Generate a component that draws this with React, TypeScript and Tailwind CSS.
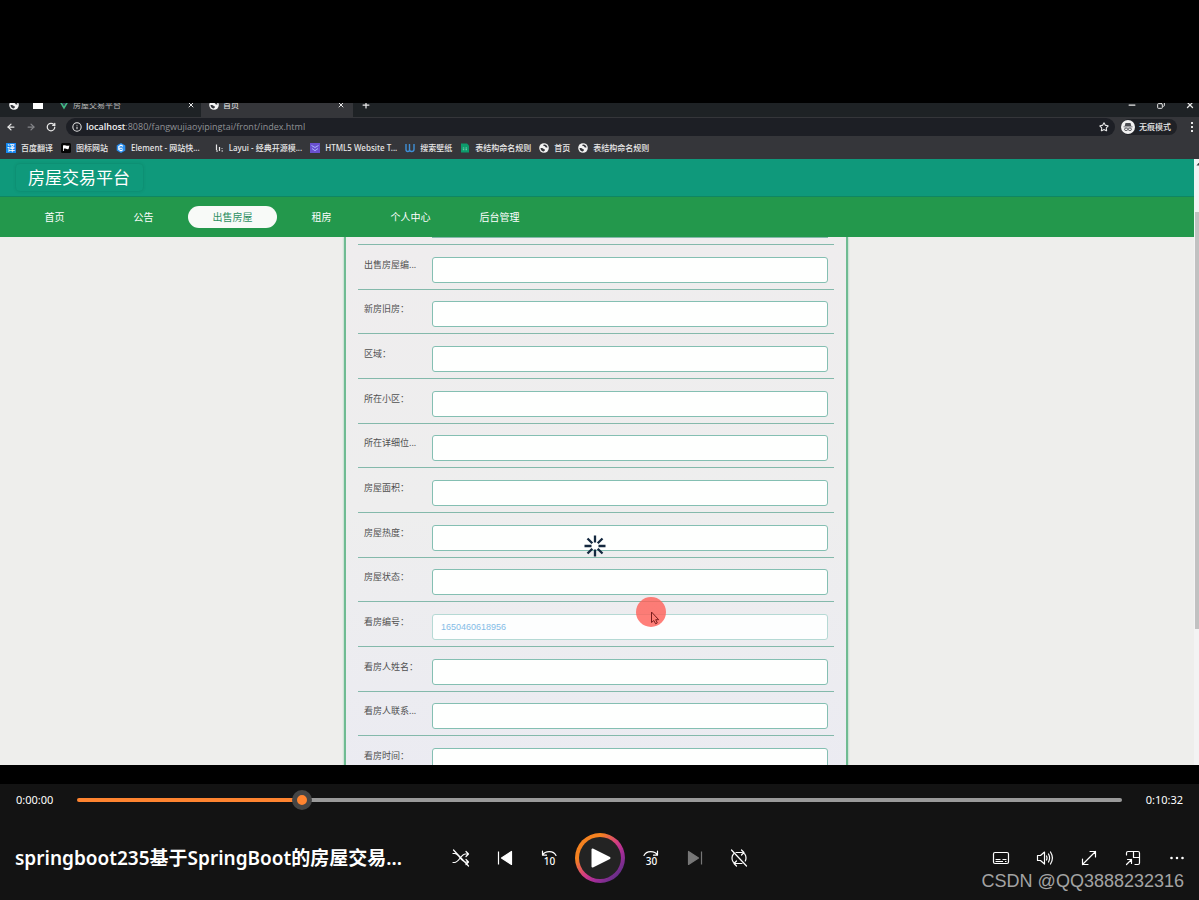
import React, { useState } from "react";
import { Star, RotateCw, ArrowLeft, ArrowRight, Info, Minus, Copy, X, Plus } from "lucide-react";

const NAV_ITEMS = ["首页", "公告", "出售房屋", "租房", "个人中心", "后台管理"];

const FIELDS = [
  { id: "bianhao", label: "出售房屋编..." },
  { id: "xinjiu", label: "新房旧房：" },
  { id: "quyu", label: "区域：" },
  { id: "xiaoqu", label: "所在小区：" },
  { id: "weizhi", label: "所在详细位..." },
  { id: "mianji", label: "房屋面积：" },
  { id: "redu", label: "房屋热度：" },
  { id: "zhuangtai", label: "房屋状态：" },
  { id: "kanfang", label: "看房编号：", value: "1650460618956" },
  { id: "xingming", label: "看房人姓名：" },
  { id: "lianxi", label: "看房人联系..." },
  { id: "shijian", label: "看房时间：" },
];

function SiteIcon({ className = "" }: { className?: string }) {
  return (
    <svg viewBox="0 0 10 10" className={`w-2.5 h-2.5 shrink-0 ${className}`}>
      <circle cx="5" cy="5" r="4.8" fill="#f4f4f4" />
      <path d="M4.800 1.400c-1 .9-.4 1.700.6 1.700.9 0 .6 1.100 1.500 1.300l1.600.2c.1-1.700-1.500-3.400-3.700-3.200z" fill="#33353a" />
      <path d="M1.500 5c1.200-.3 2.500 0 3 .8.4.7 1.500.5 1.500 1.300 0 .6-.9.8-1.100 1.500C3 8.300 1.500 7 1.500 5z" fill="#33353a" />
    </svg>
  );
}

const BOOKMARKS = [
  {
    label: "百度翻译",
    icon: <span className="w-2.5 h-2.5 bg-[#1686f0] text-white text-[8px] leading-[10px] text-center">译</span>,
  },
  {
    label: "图标网站",
    icon: (
      <svg viewBox="0 0 10 10" className="w-2.5 h-2.5">
        <rect width="10" height="10" rx="1.5" fill="#050505" />
        <path d="M2 8V2.500c2-1 3 .8 6.400 0L7.600 6C5.500 6.800 4.500 5 2.800 5.800V8z" fill="#fff" />
      </svg>
    ),
  },
  {
    label: "Element - 网站快...",
    icon: (
      <svg viewBox="0 0 10 10" className="w-2.5 h-2.5">
        <path d="M5 0l4.300 2.500v5L5 10 .7 7.500v-5z" fill="#2a8ff0" />
        <path d="M7 3.200L5 2.200 2.800 3.500v3L5 7.800l2-1.200M3 5.200h3.500" fill="none" stroke="#fff" strokeWidth="1.1" />
      </svg>
    ),
  },
  {
    label: "Layui - 经典开源模...",
    icon: (
      <svg viewBox="0 0 10 10" className="w-2.5 h-2.5 ml-1.5">
        <path d="M2.500 1.500v5.500M2 8h2M5.500 4v4M8 5v.8M7.500 8h1.500" stroke="#e6e6e6" strokeWidth="1.200" fill="none" />
      </svg>
    ),
  },
  {
    label: "HTML5 Website T...",
    icon: (
      <svg viewBox="0 0 10 10" className="w-2.5 h-2.5">
        <rect width="10" height="10" fill="#6a50cf" />
        <path d="M1.500 2.500l3.500 2 3.500-2M2 5.500l3 2.200 3-2.200" stroke="#a9b4ff" strokeWidth="1" fill="none" />
      </svg>
    ),
  },
  {
    label: "搜索壁纸",
    icon: (
      <svg viewBox="0 0 10 10" className="w-2.5 h-2.5">
        <path d="M1 1v5.500q0 2 1.800 2t1.700-2V1M4.500 6.500q0 2 2.200 2t2.300-2V1" stroke="#3f8fd6" strokeWidth="1.400" fill="none" />
      </svg>
    ),
  },
  {
    label: "表结构命名规则",
    icon: (
      <svg viewBox="0 0 10 10" className="w-2.5 h-2.5">
        <path d="M1 .5h6L9 2.500v7H1z" fill="#0d9b6c" />
        <path d="M2.800 5h1.500M5.500 5H7M2.800 6.700h1.500M5.500 6.700H7" stroke="#8fe0c2" strokeWidth=".8" />
      </svg>
    ),
  },
  { label: "首页", icon: <SiteIcon /> },
  { label: "表结构命名规则", icon: <SiteIcon /> },
];

function BrowserBar() {
  return (
    <div className="shrink-0 bg-[#35363a] text-[#e8e8e8]">
      {/* Tabs, cut off by the top of the frame */}
      <div className="h-3.5 flex items-end overflow-hidden bg-[#1e2225] text-[8px]">
        <div className="w-full h-6 shrink-0 flex items-center">
          <SiteIcon className="ml-[9px]" />
          <svg viewBox="0 0 10 8" className="w-2.5 h-2 ml-3.5">
            <path d="M0 0h4l1 1h5v7H0z" fill="#fff" />
          </svg>
          <div className="w-[150px] h-full flex items-center ml-2 pl-2 pr-1.5 gap-1">
            <svg viewBox="0 0 10 10" className="w-2.5 h-2.5">
              <path d="M0 1h2l3 5 3-5h2L5 9.500z" fill="#41b883" />
              <path d="M2 1h2l1 1.800L6 1h2L5 6z" fill="#35495e" />
            </svg>
            <span className="flex-1 text-[#b8b8b8]">房屋交易平台</span>
            <X className="w-2 h-2" strokeWidth={3} />
          </div>
          <div className="w-[152px] h-full flex items-center bg-[#35363a] px-2 gap-1">
            <SiteIcon />
            <span className="flex-1">首页</span>
            <X className="w-2 h-2" strokeWidth={3} />
          </div>
          <Plus className="w-2.5 h-2.5 ml-2" strokeWidth={3} />
          <div className="ml-auto flex items-center gap-5 pr-1">
            <Minus className="w-2.5 h-2.5" strokeWidth={3} />
            <Copy className="w-2 h-2 -scale-x-100" strokeWidth={3} />
            <X className="w-2.5 h-2.5" strokeWidth={3} />
          </div>
        </div>
      </div>

      {/* Address */}
      <div className="h-5 flex items-center pl-1.5 pr-1.5 gap-2.5">
        <button aria-label="后退"><ArrowLeft className="w-2.5 h-2.5" strokeWidth={3} /></button>
        <button aria-label="前进"><ArrowRight className="w-2.5 h-2.5 text-[#85868a]" strokeWidth={3} /></button>
        <button aria-label="刷新"><RotateCw className="w-2.5 h-2.5" strokeWidth={3} /></button>
        <div className="flex-1 h-[18px] rounded-full bg-[#1d1f25] flex items-center px-1.5 gap-1">
          <Info className="w-2.5 h-2.5 shrink-0" strokeWidth={2.5} />
          <span className="flex-1 text-[9px] font-['Open_Sans','Noto_Sans_CJK_SC',sans-serif] text-[#909296]">
            <span className="text-[#f1f1f1] font-semibold">localhost</span>:8080/fangwujiaoyipingtai/front/index.html
          </span>
          <Star className="w-2.5 h-2.5" strokeWidth={2.5} />
        </div>
        <div className="h-4 rounded-full bg-[#1f2126] flex items-center gap-1 pr-1.5 -ml-1 mr-1">
          <svg viewBox="0 0 14 14" className="w-3.5 h-3.5">
            <circle cx="7" cy="7" r="7" fill="#f1f1f1" />
            <path d="M4.500 3h5l.8 3H3.700zM2.500 6.500h9v.8h-9z" fill="#4b4d52" />
            <path d="M3.500 9.300a1.600 1.300 0 1 0 3.200 0 1.600 1.300 0 1 0-3.200 0M7.300 9.300a1.600 1.300 0 1 0 3.200 0 1.600 1.300 0 1 0-3.200 0" fill="none" stroke="#4b4d52" strokeWidth=".9" />
          </svg>
          <span className="text-[8px] leading-none font-medium">无痕模式</span>
        </div>
        <svg viewBox="0 0 2 10" className="w-0.5 h-2.5">
          <path d="M0 0h2v2H0zM0 4h2v2H0zM0 8h2v2H0z" fill="#e8e8e8" />
        </svg>
      </div>

      {/* Bookmarks */}
      <div className="h-[22px] flex items-center pl-1.5 gap-2 text-[8px] leading-none font-medium whitespace-nowrap">
        {BOOKMARKS.map((item, i) => (
          <a key={i} href="#" className="flex items-center gap-[5px]">
            {item.icon}
            {item.label}
          </a>
        ))}
      </div>
    </div>
  );
}

function Site() {
  return (
    <div className="flex-1 min-h-0 flex">
      <div className="flex-1 flex flex-col bg-[#eeeeec]">
        <header className="h-[38px] shrink-0 bg-[#0f997b] border-b border-[#0f8762] flex items-center pl-4">
          <h1 className="w-[127px] h-[27px] pl-3 rounded-sm shadow-[0_0_3px_rgba(0,80,60,0.3)] text-white text-[17px] leading-7">
            房屋交易平台
          </h1>
        </header>
        <nav className="h-10 shrink-0 bg-[#23984c] flex items-center pl-2.5 text-[10px] text-white">
          {NAV_ITEMS.map((item) => (
            <a
              key={item}
              href="#"
              className={
                item === "出售房屋"
                  ? "w-[89px] h-[22px] leading-[22px] rounded-full bg-[#f8faf8] text-[#2d8f62] text-center"
                  : "w-[89px] h-[22px] leading-[22px] text-center"
              }
            >
              {item}
            </a>
          ))}
        </nav>

        <div className="flex-1 min-h-0 overflow-hidden pr-0.5">
          <form className="relative w-[504px] mx-auto px-3 border-x-2 border-[#6fbb92] shadow-[0_0_2px_#8fcfae] bg-linear-to-b from-[#efedee] via-[#eeeeee] to-[#ebebf2]">
            <div className="h-2 border-b border-[#84b9ab] pl-[74px] pr-1.5">
              <div className="h-px bg-[#84b9ab]" />
            </div>
            <div className="h-[536px] grid auto-rows-fr">
              {FIELDS.map((field) => (
                <div key={field.id} className="flex items-end pb-1.5 px-1.5 border-b border-[#84b9ab]">
                  <label htmlFor={field.id} className="w-14 mr-3 h-9 leading-9 text-[9px] text-[#505050] whitespace-nowrap">
                    {field.label}
                  </label>
                  <input
                    id={field.id}
                    type="text"
                    readOnly={!!field.value}
                    defaultValue={field.value}
                    className={
                      field.value
                        ? "flex-1 h-[26px] px-2 rounded-[3px] border border-[#b5d9d4] bg-[#fdfefe] text-[9px] text-[#84bce6] font-['Liberation_Sans',sans-serif]"
                        : "flex-1 h-[26px] px-2 rounded-[3px] border border-[#84bfb2] bg-[#fefffe] text-[9px]"
                    }
                  />
                </div>
              ))}
            </div>

            {/* Busy indicator */}
            <svg viewBox="0 0 22 22" className="absolute left-[238px] top-[298px] w-[22px] h-[22px]">
              <path
                d="M11 .5v7M11 14.500v7M.5 11h7M14.500 11h7M3.500 3.500l4.800 4.800M13.700 13.700l4.800 4.800M18.500 3.500l-4.800 4.800M8.300 13.700l-4.800 4.800"
                stroke="#14283f"
                strokeWidth="2.300"
              />
            </svg>

            {/* Pointer */}
            <svg viewBox="0 0 30 30" className="absolute left-[290px] top-[360px] w-[30px] h-[30px]">
              <circle cx="15" cy="15" r="15" fill="#ff5f58" fillOpacity=".8" />
              <path d="M15.500 15v10.500l2.300-2 1.800 3.300 1.700-.9-1.600-3.200h3z" fill="#ff7d75" stroke="#7a1d1d" strokeWidth="1" />
            </svg>
          </form>
        </div>
      </div>

      {/* Scrollbar */}
      <div className="w-[5px] shrink-0 bg-[#f3f3f3]">
        <svg viewBox="0 0 5 10" className="w-[5px] h-2.5">
          <path d="M2.500 6.500l2-2.500L5 4v2.500z" fill="#444" />
        </svg>
        <div className="mt-[43px] ml-px h-[417px] bg-[#c1c1c1]" />
      </div>
    </div>
  );
}

function Icon({ children, className = "" }: { children: React.ReactNode; className?: string }) {
  return (
    <svg
      viewBox="0 0 18 18"
      className={`w-[18px] h-[18px] ${className}`}
      fill="none"
      stroke="currentColor"
      strokeWidth="1.200"
      strokeLinecap="round"
      strokeLinejoin="round"
    >
      {children}
    </svg>
  );
}

function ControlButton({ label, children }: { label: string; children: React.ReactNode }) {
  return (
    <button aria-label={label} className="w-11 h-11 flex items-center justify-center">
      {children}
    </button>
  );
}

function Player() {
  const [position, setPosition] = useState(210);
  const percent = position / 10;

  return (
    <div className="relative shrink-0 h-[116px] bg-[#131313] text-white">
      <div className="h-8 flex items-center text-[11px] font-['Noto_Sans',sans-serif]">
        <span className="w-[77px] pl-4">0:00:00</span>
        <input
          type="range"
          aria-label="播放进度"
          min={0}
          max={1000}
          value={position}
          onChange={(e) => setPosition(Number(e.target.value))}
          className="flex-1 h-1 rounded-full appearance-none [&::-webkit-slider-thumb]:appearance-none [&::-webkit-slider-thumb]:w-5 [&::-webkit-slider-thumb]:h-5 [&::-webkit-slider-thumb]:rounded-full [&::-webkit-slider-thumb]:border-[5px] [&::-webkit-slider-thumb]:border-[#454545] [&::-webkit-slider-thumb]:bg-[#ff8430]"
          style={{ background: `linear-gradient(to right, #ff8430 ${percent}%, #9a9a9a ${percent}%)` }}
        />
        <span className="w-[77px] pr-4 text-right">0:10:32</span>
      </div>

      <div className="h-[84px] grid grid-cols-[1fr_auto_1fr] items-center">
        <div className="pl-[15px] text-[19px] leading-7 font-semibold font-['Noto_Sans','Noto_Sans_CJK_SC',sans-serif] whitespace-nowrap">
          springboot235基于SpringBoot的房屋交易...
        </div>

        <div className="flex items-center">
          <ControlButton label="随机播放">
            <Icon>
              <path d="M1 4.500h1.500c4.500 0 6.500 8.500 11 8.500h3M1 13.500h1.500c4.500 0 6.500-8.500 11-8.500h3M14 2.500L16.500 5 14 7.500M14 10.500l2.500 2.500-2.500 2.500M1.500 1l15 16" />
            </Icon>
          </ControlButton>
          <ControlButton label="上一个">
            <Icon>
              <path d="M2.500 2.500v13" strokeLinecap="butt" />
              <path d="M15.500 2.500v13L5.500 9z" fill="currentColor" />
            </Icon>
          </ControlButton>
          <ControlButton label="后退 10 秒">
            <Icon>
              <path d="M2.500 2v4.200h4M2.500 6C5 1.800 13.500 1 16 6.500" />
              <text x="9.500" y="16" fontSize="10" fontWeight="500" textAnchor="middle" fill="currentColor" stroke="none" className="font-['Noto_Sans',sans-serif]">10</text>
            </Icon>
          </ControlButton>
          <div className="w-[58px] flex justify-center">
            <button
              aria-label="播放"
              className="w-[50px] h-[50px] p-1 rounded-full bg-linear-[135deg,#f58220_28%,#d23b86_52%,#a02c98_68%,#5c2f86_88%]"
            >
              <span className="w-full h-full rounded-full bg-[#232323] flex items-center justify-center">
                <svg viewBox="0 0 20 20" className="w-5 h-5 ml-0.5">
                  <path d="M1.500 1.500v17L18.500 10z" fill="#fff" stroke="#fff" strokeWidth="2" strokeLinejoin="round" />
                </svg>
              </span>
            </button>
          </div>
          <ControlButton label="前进 30 秒">
            <Icon>
              <path d="M15.500 2v4.200h-4M15.500 6C13 1.800 4.500 1 2 6.500" />
              <text x="9.500" y="16" fontSize="10" fontWeight="500" textAnchor="middle" fill="currentColor" stroke="none" className="font-['Noto_Sans',sans-serif]">30</text>
            </Icon>
          </ControlButton>
          <ControlButton label="下一个">
            <Icon className="text-[#777]">
              <path d="M15.500 2.500v13" strokeLinecap="butt" />
              <path d="M2.500 2.500v13L12.500 9z" fill="currentColor" />
            </Icon>
          </ControlButton>
          <ControlButton label="循环播放">
            <Icon>
              <path d="M6 3.500h5.500q4.500.5 4.500 5.500 0 1.500-.7 3M12 14.500H6.500Q2 14 2 9q0-2.500 1.500-4M11.500 1l2.500 2.500L11.500 6M6.500 12L4 14.500 6.500 17M1.500 1l15 16" />
            </Icon>
          </ControlButton>
        </div>

        <div className="flex items-center justify-end">
          <ControlButton label="字幕">
            <Icon>
              <rect x="1.500" y="3.500" width="15" height="11" rx="1.500" />
              <path d="M3.500 10.500h5M10.500 10.500h4M3.500 12.500h7.500M13 12.500h1.500" strokeWidth="1" strokeLinecap="butt" />
            </Icon>
          </ControlButton>
          <ControlButton label="音量">
            <Icon>
              <path d="M1.500 6.500v5h3l4 3.500V3l-4 3.500zM10.500 7q1 2 0 4M12.500 5q2.200 4 0 8M14.500 3q3.800 6 0 12" />
            </Icon>
          </ControlButton>
          <ControlButton label="全屏">
            <Icon>
              <path d="M2.500 15.500l13-13M10 2.500h5.500V8M2.500 10v5.500H8" />
            </Icon>
          </ControlButton>
          <ControlButton label="迷你播放器">
            <Icon>
              <path d="M2.500 6V4q0-1.500 1.500-1.500h10q1.500 0 1.500 1.500v10q0 1.500-1.500 1.500h-3M9.500 2.500v6h6M2.500 15.500l5-5M3.500 10.500h4v4" />
            </Icon>
          </ControlButton>
          <ControlButton label="更多">
            <Icon>
              <path d="M3.500 9h.01M9 9h.01M14.500 9h.01" strokeWidth="2.600" />
            </Icon>
          </ControlButton>
        </div>
      </div>

      {/* Watermark over the controls */}
      <div className="absolute right-[15px] bottom-2 text-[18px] leading-[22px] text-[#a3a3a3] font-['Liberation_Sans',sans-serif]">
        CSDN @QQ3888232316
      </div>
    </div>
  );
}

export default function App() {
  return (
    <div className="h-screen flex flex-col bg-black font-['Noto_Sans','Noto_Sans_CJK_SC',sans-serif]">
      <div className="flex-1 min-h-0 pt-[103px] pb-[19px] flex flex-col">
        <BrowserBar />
        <Site />
      </div>
      <Player />
    </div>
  );
}
